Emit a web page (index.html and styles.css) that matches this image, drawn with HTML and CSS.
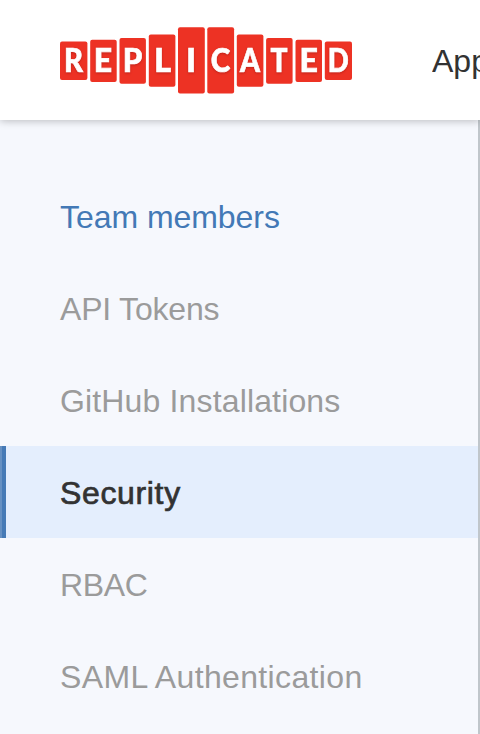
FILE: index.html
```
<!DOCTYPE html>
<html lang="en">
<head>
<meta charset="utf-8">
<title>Team settings</title>
<link rel="stylesheet" href="styles.css">
</head>
<body>
<header class="header">
  <svg class="logo" viewBox="0 0 292 68" role="img" aria-label="Replicated">
    <g class="tiles">
      <rect x="0" y="14.5" width="27.4" height="38.5" rx="2"/>
      <rect x="30.2" y="12.7" width="26.5" height="42.2" rx="2"/>
      <rect x="59.5" y="11" width="26.4" height="45.7" rx="2"/>
      <rect x="88.8" y="7.4" width="26.6" height="52.4" rx="2"/>
      <rect x="118" y="0.2" width="26.8" height="66.3" rx="2"/>
      <rect x="147.3" y="0.2" width="26.8" height="66.3" rx="2"/>
      <rect x="176.8" y="7.4" width="26.6" height="52.4" rx="2"/>
      <rect x="206.1" y="11" width="26.5" height="45.7" rx="2"/>
      <rect x="235.5" y="12.7" width="26.5" height="42.2" rx="2"/>
      <rect x="264.8" y="14.5" width="27.2" height="38.5" rx="2"/>
    </g>
    <g class="letters">
      <text x="13.5" y="45" textLength="19" lengthAdjust="spacingAndGlyphs">R</text>
      <text x="43" y="45">E</text>
      <text x="72.5" y="45" textLength="19.5" lengthAdjust="spacingAndGlyphs">P</text>
      <text x="102.5" y="45">L</text>
      <text x="131.2" y="45">I</text>
      <text x="160.5" y="45" textLength="19.5" lengthAdjust="spacingAndGlyphs">C</text>
      <text x="190" y="45" textLength="20" lengthAdjust="spacingAndGlyphs">A</text>
      <text x="219" y="45" textLength="17" lengthAdjust="spacingAndGlyphs">T</text>
      <text x="248.7" y="45">E</text>
      <text x="278.3" y="45" textLength="21" lengthAdjust="spacingAndGlyphs">D</text>
    </g>
  </svg>
  <a class="nav-link">Apps</a>
</header>
<nav class="sidebar">
  <a class="item item-link"><span class="w-team">Team members</span></a>
  <a class="item"><span class="w-api">API Tokens</span></a>
  <a class="item"><span class="w-github">GitHub Installations</span></a>
  <a class="item item-active"><span class="w-security">Security</span></a>
  <a class="item"><span class="w-rbac">RBAC</span></a>
  <a class="item"><span class="w-saml">SAML Authentication</span></a>
</nav>
</body>
</html>
```
FILE: styles.css
```
* { box-sizing: border-box; }
body {
  margin: 0;
  height: 734px;
  overflow: hidden;
  display: flex;
  flex-direction: column;
  background: #f6f8fd;
  font-family: "Liberation Sans", Arial, sans-serif;
}
.header {
  position: relative;
  flex: none;
  height: 120px;
  padding: 27px 0 0 60px;
  display: flex;
  gap: 80px;
  background: #fff;
  box-shadow: 0 1px 8px rgba(0, 0, 0, 0.25);
}
.logo { flex: none; width: 292px; height: 68px; }
.tiles { fill: #ed3224; }
.letters {
  fill: #fff;
  stroke: #fff;
  stroke-width: 0.7px;
  font-family: Lato, sans-serif;
  font-size: 32px;
  font-weight: 900;
  text-anchor: middle;
  filter: drop-shadow(0 1px 1px rgba(90, 0, 0, 0.3));
}
.nav-link {
  flex: 1;
  min-width: 0;
  overflow: hidden;
  white-space: nowrap;
  font-size: 32px;
  line-height: 69px;
  color: #323232;
}
.sidebar {
  flex: 1;
  padding-top: 50px;
  border-right: 2px solid #c0c6cb;
}
.item {
  display: flex;
  align-items: center;
  height: 92px;
  padding: 2px 0 0 60px;
  font-size: 32px;
  white-space: nowrap;
  color: #9b9b9b;
}
.w-team { letter-spacing: -0.05px; }
.w-api { letter-spacing: -0.2px; }
.w-github { letter-spacing: 0.15px; }
.w-security { letter-spacing: 0.65px; }
.w-rbac { letter-spacing: -0.35px; }
.w-saml { letter-spacing: 0.35px; }
.item-link { color: #4379b6; }
.item-active {
  background: linear-gradient(90deg, #6690c2 2px, #467ab6 2px 6px, #e4eefd 6px);
  color: #323232;
  -webkit-text-stroke: 0.7px #323232;
}
```
